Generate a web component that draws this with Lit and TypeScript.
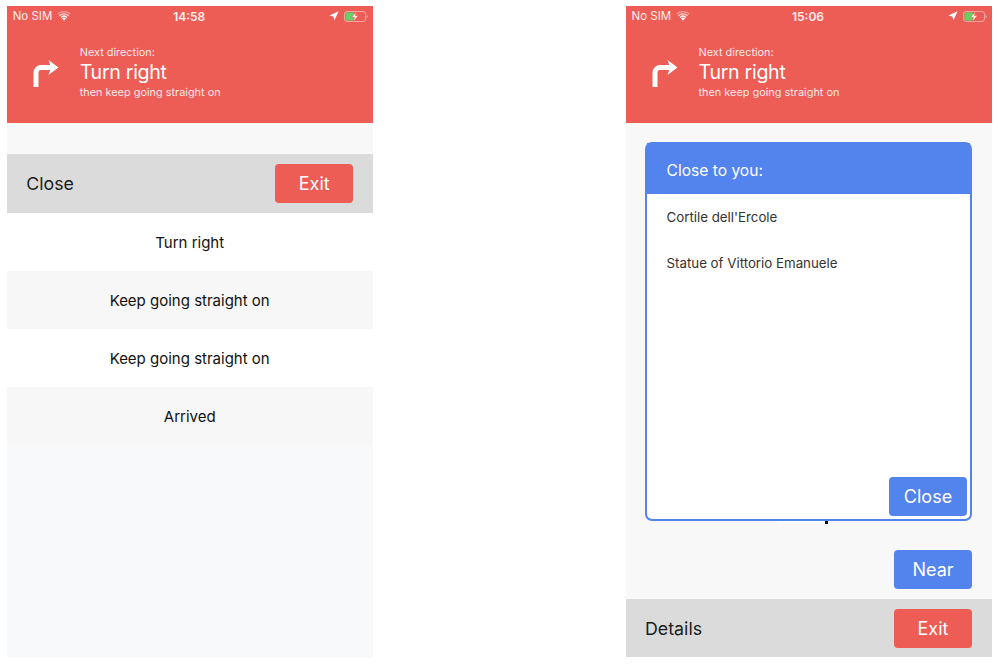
import { LitElement, html, css, svg } from "lit";
import { customElement, property } from "lit/decorators.js";

const wifi = svg`<svg class="wifi" width="14" height="10" viewBox="0 0 15 11"><path d="M7.5 10.6 5.2 8.1a3.4 3.4 0 0 1 4.6 0z" fill="#fff"/><path d="M3.7 6.5a5.6 5.6 0 0 1 7.6 0l-1 1.1a4.1 4.1 0 0 0-5.6 0z" fill="#fff" opacity=".95"/><path d="M1.9 4.6a8.2 8.2 0 0 1 11.2 0l-1.1 1.1a6.7 6.7 0 0 0-9 0z" fill="#fff" opacity=".7"/><path d="M.2 2.8a10.7 10.7 0 0 1 14.6 0l-1 1.1a9.3 9.3 0 0 0-12.6 0z" fill="#fff" opacity=".4"/></svg>`;
const loc = svg`<svg width="10" height="10" viewBox="0 0 10 10"><path d="M9.6.3 5.4 9.6 4.4 5.6.4 4.6z" fill="#fff"/></svg>`;
const battery = svg`<svg width="24" height="11" viewBox="0 0 24 11"><rect x=".5" y=".5" width="21" height="10" rx="2.5" fill="none" stroke="#fff" stroke-opacity=".45"/><path d="M22.5 3.7c.8.2 1.2.9 1.2 1.8s-.4 1.6-1.2 1.8z" fill="#fff" opacity=".45"/><rect x="1.5" y="1.5" width="8.5" height="8" rx="1" fill="#62d262"/><path d="M12.5 .8 7.5 6.2h3l-1.2 4.2 5-5.6h-3z" fill="#fff" stroke="#ee5c56" stroke-width=".6"/></svg>`;
const arrow = svg`<svg width="26" height="28" viewBox="0 0 26 28"><path d="M3 28V13.5a5 5 0 0 1 5-5h11" fill="none" stroke="#fff" stroke-width="5"/><path d="M15.5 1 25.5 8.5 15.5 16l2.6-7.5z" fill="#fff"/></svg>`;

@customElement("nav-header")
class NavHeader extends LitElement {
  @property() time = "";
  static styles = css`
    :host { display: block; height: 117px; background: #ee5c56; color: #fff; font-family: Inter, sans-serif; }
    .status { display: flex; align-items: center; height: 20px; padding: 0 5px 0 6px; font-size: 11.5px; color: #fdeeee; }
    .left { display: flex; align-items: center; gap: 5px; flex: 1; }
    .time { font-weight: 600; font-size: 12px; flex: 1; text-align: center; padding-right: 2px; }
    .right { display: flex; align-items: center; gap: 5px; flex: 1; justify-content: flex-end; }
    .main { display: flex; align-items: center; padding: 18.5px 0 0 26px; }
    .icon { width: 47px; height: 28px; padding-top: 3px; }
    .t1, .t3 { font-size: 10.9px; line-height: 14px; color: #fde9e8; }
    .t1 { margin-bottom: 1.5px; }
    .t3 { margin-top: -0.5px; }
    .t2 { font-size: 19.6px; line-height: 25px; font-weight: 400; letter-spacing: -0.3px; }
  `;
  render() {
    return html`<div class="status">
        <div class="left"><span>No SIM</span>${wifi}</div>
        <div class="time">${this.time}</div>
        <div class="right">${loc}${battery}</div>
      </div>
      <div class="main">
        <div class="icon">${arrow}</div>
        <div>
          <div class="t1">Next direction:</div>
          <div class="t2">Turn right</div>
          <div class="t3">then keep going straight on</div>
        </div>
      </div>`;
  }
}

@customElement("app-root")
class AppRoot extends LitElement {
  static styles = css`
    :host { display: flex; justify-content: space-between; width: 998px; height: 665px; box-sizing: border-box; padding: 6px 6.5px 8px 6.7px; background: #fff; font-family: Inter, sans-serif; color: #1c1c1c; }
    .phone { width: 366px; display: flex; flex-direction: column; background: #f8f8f8; }
    .gap { height: 31px; }
    .bar { display: flex; align-items: center; justify-content: space-between; height: 58.5px; flex: none; background: #dbdbdb; padding: 0 19.5px; font-size: 17.8px; box-sizing: border-box; }
    .bar.low { height: 58px; }
    .btn { width: 78px; height: 39px; border-radius: 4px; display: flex; align-items: center; justify-content: center; color: #fff; font-size: 18px; }
    .red { background: #ee5c56; }
    .blue { background: #5383ec; }
    .row { height: 58.2px; box-sizing: border-box; padding-top: 1px; display: flex; align-items: center; justify-content: center; font-size: 15px; background: #fff; color: #111; }
    .row.alt { background: #f7f7f7; }
    .rest { flex: 1; background: #f8f9fb; }
    .body { flex: 1; display: flex; flex-direction: column; padding: 19px 19.5px 10px; position: relative; }
    .modal { height: 379px; box-sizing: border-box; border: 2px solid #5383ec; border-radius: 7px; background: #fff; display: flex; flex-direction: column; }
    .mhead { height: 51px; box-sizing: border-box; padding: 3px 0 0 19.5px; flex: none; margin-top: -1px; background: #5383ec; color: #fff; font-size: 15.6px; display: flex; align-items: center; }
    .item { height: 46px; display: flex; align-items: center; padding-left: 19.5px; font-size: 13.3px; color: #333; }
    .list { flex: 1; }
    .mfoot { display: flex; justify-content: flex-end; padding: 0 3px 3px 0; }
    .near { display: flex; justify-content: flex-end; margin-top: 29px; }
    .dot { position: absolute; left: 199.5px; top: 397.5px; width: 3px; height: 3px; background: #111; }
    .smudge { position: absolute; left: 151px; top: 398px; width: 48px; height: 2.5px; background: #fff; border-radius: 0 0 4px 24px; }
  `;
  render() {
    return html`
      <div class="phone">
        <nav-header time="14:58"></nav-header>
        <div class="gap"></div>
        <div class="bar"><span>Close</span><div class="btn red">Exit</div></div>
        <div class="row">Turn right</div>
        <div class="row alt">Keep going straight on</div>
        <div class="row">Keep going straight on</div>
        <div class="row alt">Arrived</div>
        <div class="rest"></div>
      </div>
      <div class="phone">
        <nav-header time="15:06"></nav-header>
        <div class="body">
          <div class="modal">
            <div class="mhead">Close to you:</div>
            <div class="list">
              <div class="item">Cortile dell'Ercole</div>
              <div class="item">Statue of Vittorio Emanuele</div>
            </div>
            <div class="mfoot"><div class="btn blue">Close</div></div>
          </div>
          <div class="smudge"></div>
          <div class="dot"></div>
          <div class="near"><div class="btn blue">Near</div></div>
        </div>
        <div class="bar low"><span>Details</span><div class="btn red">Exit</div></div>
      </div>`;
  }
}
